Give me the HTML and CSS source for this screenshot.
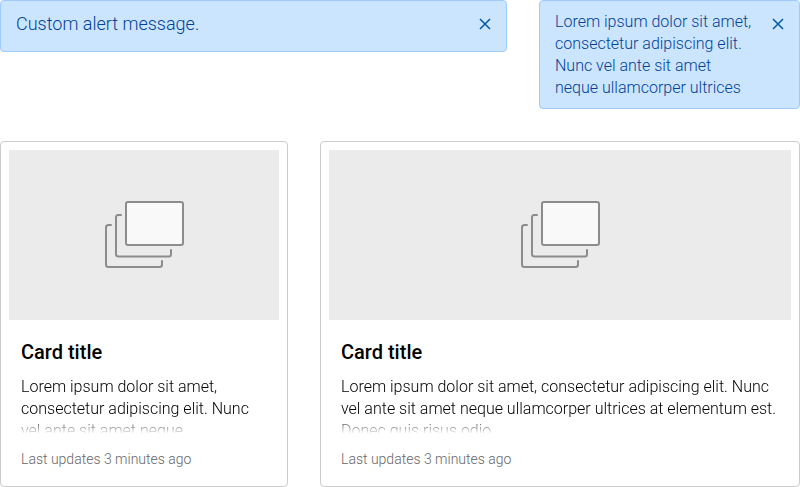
FILE: index.html
```html
<!DOCTYPE html>
<html lang="en">
<head>
<meta charset="utf-8">
<title>Alerts and cards</title>
<link rel="stylesheet" href="styles.css">
</head>
<body>
<main class="page">
  <section class="alerts">
    <div class="alert alert-wide">
      <p class="alert-text">Custom alert message.</p>
      <svg class="close" viewBox="0 0 12 12"><path d="M1 1 11 11M11 1 1 11"/></svg>
    </div>
    <div class="alert alert-narrow">
      <p class="alert-text">Lorem ipsum dolor sit amet, consectetur adipiscing elit. Nunc vel ante sit amet<br>neque ullamcorper ultrices</p>
      <svg class="close" viewBox="0 0 12 12"><path d="M1 1 11 11M11 1 1 11"/></svg>
    </div>
  </section>
  <section class="cards">
    <article class="card">
      <div class="media">
        <svg class="stack" viewBox="0 0 80 68"><path d="M7 25H4.500Q2 25 2 27.500V64.500Q2 67 4.500 67H55.500Q58 67 58 64.500V61"/><path d="M17 15H14Q12 15 12 17.500V54Q12 56.500 14.500 56.500H65Q67 56.500 67 54V50"/><rect x="22" y="2" width="57" height="43" rx="2"/></svg>
      </div>
      <div class="body">
        <h2 class="title">Card title</h2>
        <p class="text">Lorem ipsum dolor sit amet, consectetur adipiscing elit. Nunc vel ante sit amet neque</p>
        <p class="meta">Last updates 3 minutes ago</p>
      </div>
    </article>
    <article class="card">
      <div class="media">
        <svg class="stack" viewBox="0 0 80 68"><path d="M7 25H4.500Q2 25 2 27.500V64.500Q2 67 4.500 67H55.500Q58 67 58 64.500V61"/><path d="M17 15H14Q12 15 12 17.500V54Q12 56.500 14.500 56.500H65Q67 56.500 67 54V50"/><rect x="22" y="2" width="57" height="43" rx="2"/></svg>
      </div>
      <div class="body">
        <h2 class="title">Card title</h2>
        <p class="text">Lorem ipsum dolor sit amet, consectetur adipiscing elit. Nunc vel ante sit amet neque ullamcorper ultrices at elementum est. Donec quis risus odio.</p>
        <p class="meta">Last updates 3 minutes ago</p>
      </div>
    </article>
  </section>
</main>
</body>
</html>
```
FILE: styles.css
```css
* { box-sizing: border-box; }
body { margin: 0; background: #fff; font-family: Roboto, sans-serif; font-weight: 300; }
h2, p { margin: 0; }
.page { width: 800px; height: 487px; overflow: hidden; }
.alerts { display: grid; grid-template-columns: 507px 261px; gap: 32px; align-items: start; height: 141px; }
.alert { display: flex; justify-content: space-between; border: 1px solid #9fcaff; border-radius: 4px; background: #cce5ff; color: #004298; padding: 0 15px; }
.alert-wide { height: 52px; font-size: 18px; line-height: 46px; }
.alert-narrow { height: 109px; padding-top: 10px; font-size: 16px; line-height: 22px; }
.alert-narrow .alert-text { width: 200px; }
.close { flex: none; width: 12px; height: 12px; margin-top: 17px; fill: none; stroke: #0057a3; stroke-width: 1.500; }
.alert-narrow .close { margin-top: 7px; }
.cards { display: grid; grid-template-columns: 288px 480px; gap: 32px; }
.card { height: 346px; padding: 8px; border: 1px solid #ccc; border-radius: 4px; background: #fff; }
.media { display: flex; align-items: flex-start; justify-content: center; height: 170px; padding-top: 50px; background: #ebebeb; }
.stack { width: 80px; height: 68px; fill: none; stroke: #8c8c8c; stroke-width: 2; stroke-linecap: round; }
.stack rect { fill: #f9f9f9; }
.body { padding: 20px 12px 0; }
.title { font-size: 20px; line-height: 24px; font-weight: 500; color: #000; }
.text { height: 57px; margin-top: 12px; overflow: hidden; font-size: 16px; line-height: 22px; color: #000; -webkit-mask-image: linear-gradient(#000 42px, transparent 58px); mask-image: linear-gradient(#000 42px, transparent 58px); }
.meta { margin-top: 16px; font-size: 14px; line-height: 20px; color: #666; }
```
